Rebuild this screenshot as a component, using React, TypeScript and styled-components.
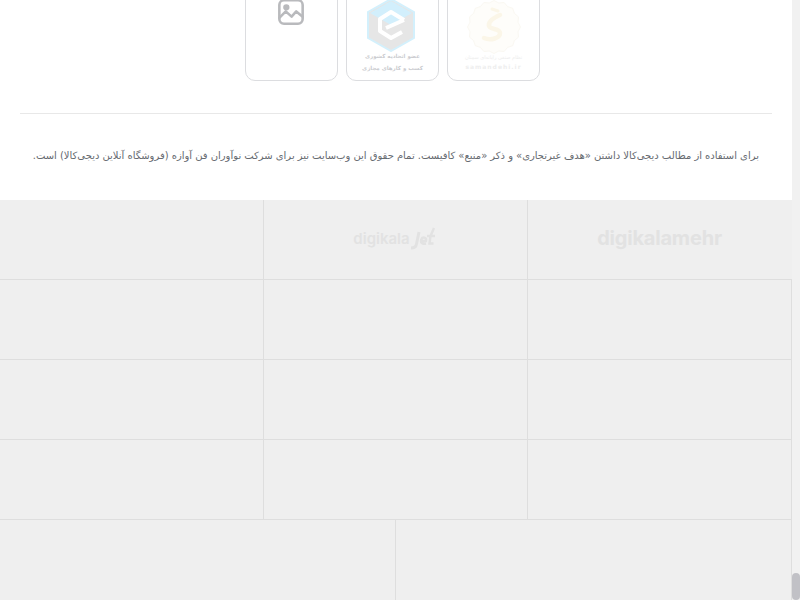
import React from 'react'
import styled, { createGlobalStyle } from 'styled-components';

const GlobalStyle = createGlobalStyle`
  html, body {
    margin: 0;
    padding: 0;
    height: 600px;
    overflow: hidden;
    background: #fff;
    font-family: "DejaVu Sans", "Noto Sans", sans-serif;
  }
`;

const rows = [3, 3, 3, 3, 2];

// scalloped outline of the samandehi seal
const sealPoints = Array.from({ length: 32 }, (_, i) => {
  const angle = (i / 32) * Math.PI * 2;
  const radius = i % 2 === 0 ? 26.5 : 24.5;
  return `${(27 + radius * Math.cos(angle)).toFixed(1)},${(27 + radius * Math.sin(angle)).toFixed(1)}`;
}).join(' ');

function PlaceholderIcon() {
  return (
    <svg width="28" height="28" viewBox="0 0 24 24" fill="none" stroke="#b9babd" strokeWidth="2.2" strokeLinecap="round" strokeLinejoin="round">
      <rect x="2" y="2" width="20" height="20" rx="4" />
      <circle cx="8" cy="8" r="1.6" fill="#b9babd" />
      <path d="M2 17l5.5-5.5 5 4.5 4-4.5L22 16" />
    </svg>
  );
}

function NemadLogo() {
  return (
    <svg width="50" height="54" viewBox="0 0 50 54">
      <path d="M25 1L48 14V40L25 53L2 40V14Z" fill="#e6e6e6" stroke="#d3f0fc" strokeWidth="2" />
      <path d="M25 3L46 15L25 27L4 15Z" fill="#d2effc" />
      <path d="M38 22L25 14L14 21V33L25 40L36 34M20 30L38 22" fill="none" stroke="#fff" strokeWidth="4" strokeLinejoin="round" />
    </svg>
  );
}

function SamandehiLogo() {
  return (
    <svg width="54" height="54" viewBox="0 0 54 54">
      <polygon points={sealPoints} fill="#fefdfa" stroke="#faf8f2" strokeWidth="1" />
      <path d="M33 15C26 18 21 22 22 26C23 30 33 28 33 33C33 38 24 41 17 38" fill="none" stroke="#fbf6e8" strokeWidth="4.5" strokeLinecap="round" />
      <path d="M25 9L31 11" stroke="#fbf6e8" strokeWidth="3" strokeLinecap="round" />
    </svg>
  );
}

function JetLogo() {
  return (
    <svg width="26" height="24" viewBox="0 0 26 24">
      <path d="M9 5L6.5 17C6 20 4 21 1 21" fill="none" stroke="#e2e2e2" strokeWidth="3" />
      <path d="M10 14H16C17 10 12.5 9.5 11.5 12C10 15.5 12 17.5 16 16.5" fill="none" stroke="#e2e2e2" strokeWidth="2.4" />
      <path d="M24 1L20.5 9L19.5 16.5H23.5M17 9H25" fill="none" stroke="#e2e2e2" strokeWidth="2.4" />
    </svg>
  );
}

export default function App() {
  return (
    <Screen>
      <GlobalStyle />
      <Page>
        <Footer>
          <Badges>
            <Badge>
              <IconSlot><PlaceholderIcon /></IconSlot>
            </Badge>
            <Badge>
              <NemadSlot><NemadLogo /></NemadSlot>
              <BadgeLine dir="rtl">عضو اتحادیه کشوری</BadgeLine>
              <BadgeLine dir="rtl">کسب و کارهای مجازی</BadgeLine>
            </Badge>
            <Badge>
              <SealSlot><SamandehiLogo /></SealSlot>
              <SealLine dir="rtl">نظام صنفی رایانه‌ای سمنان</SealLine>
              <SealLatin>samandehi.ir</SealLatin>
            </Badge>
          </Badges>
          <Divider />
          <Legal dir="rtl">
            برای استفاده از مطالب دیجی‌کالا داشتن «هدف غیرتجاری» و ذکر «منبع» کافیست. تمام حقوق این وب‌سایت نیز برای شرکت نوآوران فن آوازه (فروشگاه آنلاین دیجی‌کالا) است.
          </Legal>
        </Footer>
        <BrandGrid>
          {rows.map((count, r) => (
            <BrandRow key={r} $last={r === rows.length - 1}>
              {Array.from({ length: count }).map((_, c) => (
                <BrandCell key={c} $open={r === 0 && c === 0}>
                  {r === 0 && c === 0 && <Wordmark>digikalamehr</Wordmark>}
                  {r === 0 && c === 1 && <JetMark><JetWord>digikala</JetWord><JetLogo /></JetMark>}
                </BrandCell>
              ))}
            </BrandRow>
          ))}
        </BrandGrid>
      </Page>
      <ScrollRail><ScrollThumb /></ScrollRail>
    </Screen>
  );
}

const Screen = styled.div`
  display: flex;
  width: 800px;
  height: 600px;
  overflow: hidden;
`;
const Page = styled.div`
  width: 792px;
  display: flex;
  flex-direction: column;
`;
const Footer = styled.div`
  height: 200px;
  flex: none;
  background: #fff;
  padding: 0 20px;
  box-sizing: border-box;
`;
const Badges = styled.div`
  display: flex;
  justify-content: center;
  gap: 8px;
  height: 81px;
  align-items: flex-end;
  margin-right: 7px;
`;
const Badge = styled.div`
  width: 93px;
  height: 120px;
  flex: none;
  box-sizing: border-box;
  border: 1px solid #dcdde0;
  border-radius: 10px;
  display: flex;
  flex-direction: column;
  align-items: center;
  background: #fff;
`;
const IconSlot = styled.div`
  margin: 36px 1px 0 0;
  height: 28px;
`;
const NemadSlot = styled.div`
  margin: 36px 3px 0 0;
  height: 52px;
`;
const SealSlot = styled.div`
  margin: 38px 0 0 0;
  height: 52px;
`;
const BadgeLine = styled.div`
  font-size: 5.5px;
  line-height: 12px;
  font-weight: bold;
  color: #cbccd0;
  white-space: nowrap;
`;
const SealLine = styled.div`
  font-size: 5px;
  line-height: 11px;
  color: #eeeeee;
  white-space: nowrap;
`;
const SealLatin = styled.div`
  font-size: 6px;
  line-height: 8px;
  font-weight: bold;
  letter-spacing: 1px;
  color: #eeeeee;
`;
const Divider = styled.div`
  height: 1px;
  background: #e8e8e8;
  margin-top: 32px;
`;
const Legal = styled.p`
  margin: 33px 13px 0;
  font-size: 10px;
  word-spacing: -0.12px;
  line-height: 18px;
  color: #666a70;
  white-space: nowrap;
`;
const BrandGrid = styled.div`
  flex: 1;
  background: #efefef;
  display: flex;
  flex-direction: column;
`;
const BrandRow = styled.div<{ $last: boolean }>`
  display: flex;
  flex-direction: row-reverse;
  height: 80px;
  flex: none;
  box-sizing: border-box;
  border-bottom: ${p => (p.$last ? '0' : '1px solid #dedede')};
`;
const BrandCell = styled.div<{ $open: boolean }>`
  flex: 1;
  display: flex;
  align-items: center;
  justify-content: center;
  box-sizing: border-box;
  border-right: 1px solid ${p => (p.$open ? 'transparent' : '#dedede')};
`;
const Wordmark = styled.div`
  font-family: "Inter", sans-serif;
  font-size: 20px;
  font-weight: 700;
  letter-spacing: -0.2px;
  color: #e2e2e2;
  padding-bottom: 4px;
`;
const JetMark = styled.div`
  display: flex;
  align-items: center;
  padding: 0 2px 2px 0;
`;
const JetWord = styled.span`
  font-family: "Inter", sans-serif;
  font-size: 15px;
  font-weight: 600;
  color: #e2e2e2;
`;
const ScrollRail = styled.div`
  width: 8px;
  height: 600px;
  flex: none;
  background: #f1f1f1;
  display: flex;
  flex-direction: column;
  justify-content: flex-end;
`;
const ScrollThumb = styled.div`
  height: 27px;
  background: #c1c1c6;
  border-radius: 4px;
`;
